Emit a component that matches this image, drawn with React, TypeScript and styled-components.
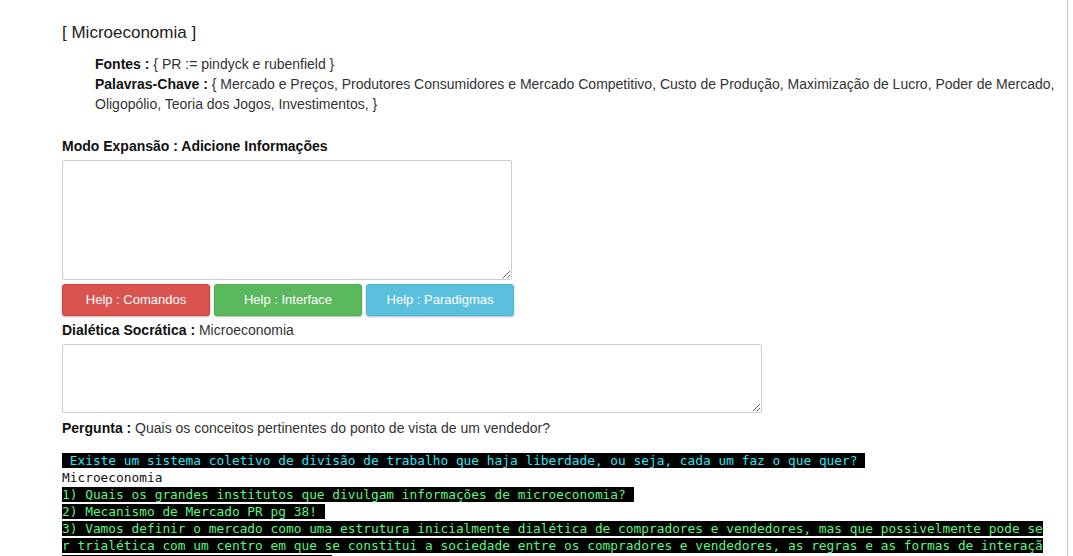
import React from "react";
import styled, { createGlobalStyle } from "styled-components";

const GlobalStyle = createGlobalStyle`
  html, body { margin: 0; padding: 0; background: #fff; }
  body {
    font-family: "Liberation Sans", Arial, sans-serif;
    font-size: 14px;
    line-height: 20px;
    color: #333;
    overflow: hidden;
  }
`;

const Page = styled.div`
  display: flex;
  min-height: 100vh;
`;

const Main = styled.main`
  box-sizing: border-box;
  width: 1068px;
  min-height: 556px;
  border-right: 1px solid #c6c6c6;
  padding: 22px 0 0 62px;
  display: flex;
  flex-direction: column;
`;

const Title = styled.h1`
  margin: 0;
  font-size: 17px;
  line-height: 22px;
  font-weight: normal;
  color: #222;
`;

const Info = styled.div`
  margin-top: 10px;
  padding-left: 33px;
  width: 1005px;
  box-sizing: border-box;
  color: #333;
`;

const InfoRow = styled.div``;

const Strong = styled.b`
  color: #111;
  font-weight: bold;
`;

const Label = styled.div<{ $top?: number; $bottom?: number }>`
  margin-top: ${(p) => p.$top ?? 0}px;
  margin-bottom: ${(p) => p.$bottom ?? 0}px;
  color: #333;
`;

const TextArea = styled.textarea<{ $w: number; $h: number }>`
  display: block;
  box-sizing: border-box;
  width: ${(p) => p.$w}px;
  height: ${(p) => p.$h}px;
  margin: 0;
  border: 1px solid #cdcdcd;
  border-radius: 2px;
  padding: 4px 6px;
  font-family: "Liberation Sans", Arial, sans-serif;
  font-size: 14px;
  outline: none;
`;

const ButtonRow = styled.div`
  display: flex;
  gap: 4px;
  margin-top: 4px;
`;

const HelpButton = styled.button<{ $bg: string; $border: string }>`
  width: 148px;
  height: 32px;
  box-sizing: border-box;
  border: 1px solid ${(p) => p.$border};
  border-radius: 3px;
  background: ${(p) => p.$bg};
  color: #fff;
  font-family: "Liberation Sans", Arial, sans-serif;
  font-size: 13px;
  line-height: 20px;
  padding: 0;
  box-shadow: 0 1px 2px rgba(0, 0, 0, 0.28);
  cursor: pointer;
`;

const Terminal = styled.div`
  margin-top: 14px;
  width: 985px;
  font-family: "DejaVu Sans Mono", "Liberation Mono", monospace;
  font-size: 12.84px;
  line-height: 17px;
  white-space: pre-wrap;
  word-break: break-all;
  color: #111;
`;

const TermLine = styled.div``;

const TermText = styled.span<{ $color?: string; $dark?: boolean }>`
  background: ${(p) => (p.$dark ? "#000" : "transparent")};
  color: ${(p) => p.$color ?? "#111"};
`;

const GREEN = "#5cf57d";
const CYAN = "#34e3f2";

export default function App() {
  return (
    <Page>
      <GlobalStyle />
      <Main>
        <Title>[ Microeconomia ]</Title>
        <Info>
          <InfoRow>
            <Strong>Fontes :</Strong> {"{ PR := pindyck e rubenfield }"}
          </InfoRow>
          <InfoRow>
            <Strong>Palavras-Chave :</Strong>{" "}
            {
              "{ Mercado e Preços, Produtores Consumidores e Mercado Competitivo, Custo de Produção, Maximização de Lucro, Poder de Mercado, Oligopólio, Teoria dos Jogos, Investimentos, }"
            }
          </InfoRow>
        </Info>
        <Label $top={22} $bottom={4}>
          <Strong>Modo Expansão : Adicione Informações</Strong>
        </Label>
        <TextArea $w={450} $h={120} />
        <ButtonRow>
          <HelpButton $bg="#d9534f" $border="#d43f3a">Help : Comandos</HelpButton>
          <HelpButton $bg="#5cb85c" $border="#4cae4c">Help : Interface</HelpButton>
          <HelpButton $bg="#5bc0de" $border="#46b8da">Help : Paradigmas</HelpButton>
        </ButtonRow>
        <Label $top={4} $bottom={4}>
          <Strong>Dialética Socrática :</Strong> Microeconomia
        </Label>
        <TextArea $w={700} $h={69} />
        <Label $top={5}>
          <Strong>Pergunta :</Strong> Quais os conceitos pertinentes do ponto de vista de um vendedor?
        </Label>
        <Terminal>
          <TermLine>
            <TermText $dark $color={CYAN}>
              {" Existe um sistema coletivo de divisão de trabalho que haja liberdade, ou seja, cada um faz o que quer? "}
            </TermText>
          </TermLine>
          <TermLine>
            <TermText>Microeconomia</TermText>
          </TermLine>
          <TermLine>
            <TermText $dark $color={GREEN}>
              {"1) Quais os grandes institutos que divulgam informações de microeconomia? "}
            </TermText>
          </TermLine>
          <TermLine>
            <TermText $dark $color={GREEN}>
              {"2) Mecanismo de Mercado PR pg 38! "}
            </TermText>
          </TermLine>
          <TermLine>
            <TermText $dark $color={GREEN}>
              {
                "3) Vamos definir o mercado como uma estrutura inicialmente dialética de compradores e vendedores, mas que possivelmente pode ser trialética com um centro em que se constitui a sociedade entre os compradores e vendedores, as regras e as formas de interação, que determina os preços finais. "
              }
            </TermText>
          </TermLine>
        </Terminal>
      </Main>
    </Page>
  );
}
